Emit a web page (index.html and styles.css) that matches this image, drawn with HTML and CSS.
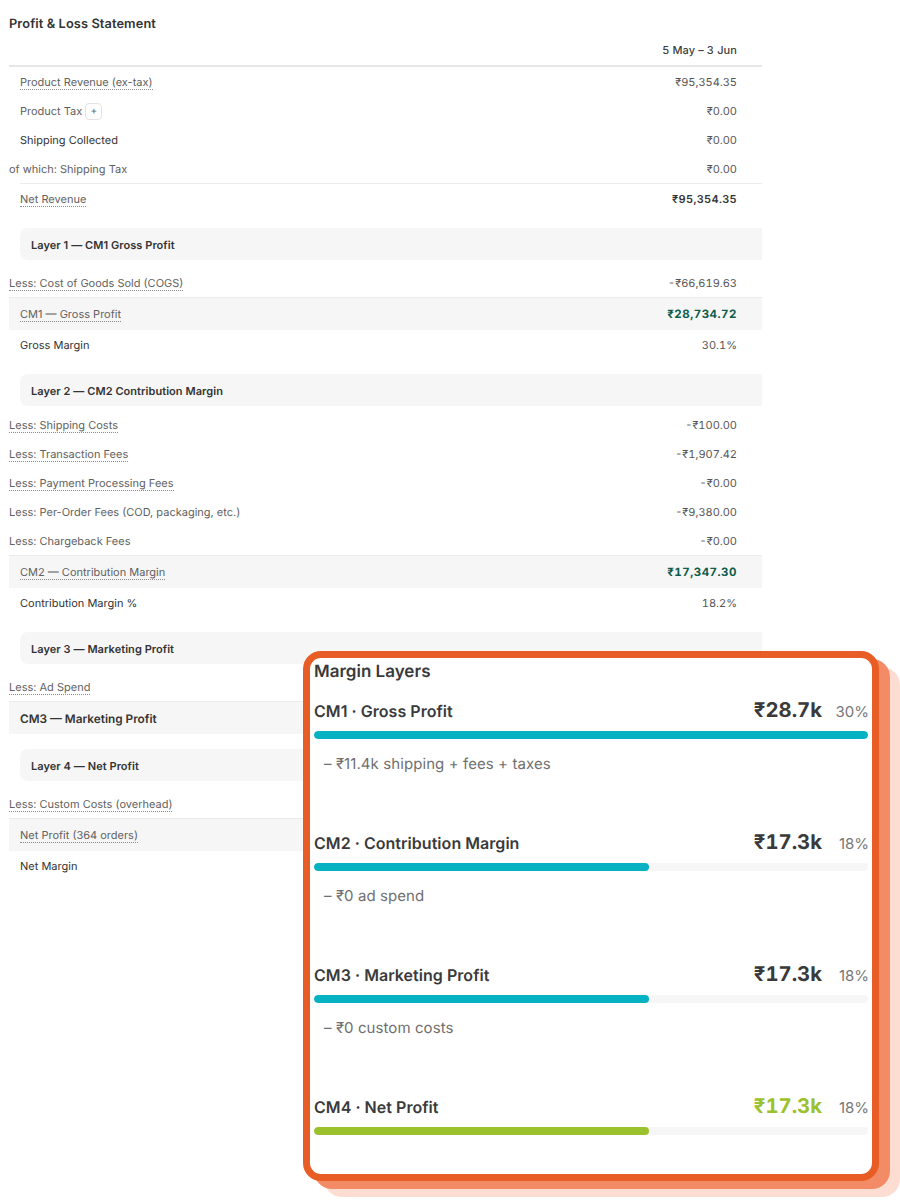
FILE: index.html
```html
<!DOCTYPE html>
<html lang="en">
<head>
<meta charset="utf-8">
<title>Profit &amp; Loss Statement</title>
<link rel="stylesheet" href="styles.css">
</head>
<body>
<main class="page">
  <h1 class="title">Profit &amp; Loss Statement</h1>
  <section class="statement">
    <div class="head"><span>5 May – 3 Jun</span></div>
    <div class="row in"><span class="lbl tip">Product Revenue (ex-tax)</span><span class="val">₹95,354.35</span></div>
    <div class="row in"><span class="lbl">Product Tax<span class="plus">+</span></span><span class="val">₹0.00</span></div>
    <div class="row in"><span class="lbl dark">Shipping Collected</span><span class="val">₹0.00</span></div>
    <div class="row"><span class="lbl">of which: Shipping Tax</span><span class="val">₹0.00</span></div>
    <div class="row total"><span class="lbl tip">Net Revenue</span><span class="val strong">₹95,354.35</span></div>

    <div class="band first">Layer 1 — CM1 Gross Profit</div>
    <div class="row"><span class="lbl tip">Less: Cost of Goods Sold (COGS)</span><span class="val">-₹66,619.63</span></div>
    <div class="row in sub"><span class="lbl tip">CM1 — Gross Profit</span><span class="val green">₹28,734.72</span></div>
    <div class="row in"><span class="lbl dark">Gross Margin</span><span class="val">30.1%</span></div>

    <div class="band tight">Layer 2 — CM2 Contribution Margin</div>
    <div class="row"><span class="lbl tip">Less: Shipping Costs</span><span class="val">-₹100.00</span></div>
    <div class="row"><span class="lbl tip">Less: Transaction Fees</span><span class="val">-₹1,907.42</span></div>
    <div class="row"><span class="lbl tip">Less: Payment Processing Fees</span><span class="val">-₹0.00</span></div>
    <div class="row"><span class="lbl">Less: Per-Order Fees (COD, packaging, etc.)</span><span class="val">-₹9,380.00</span></div>
    <div class="row"><span class="lbl">Less: Chargeback Fees</span><span class="val">-₹0.00</span></div>
    <div class="row in sub"><span class="lbl tip">CM2 — Contribution Margin</span><span class="val green">₹17,347.30</span></div>
    <div class="row in"><span class="lbl dark">Contribution Margin %</span><span class="val">18.2%</span></div>

    <div class="band">Layer 3 — Marketing Profit</div>
    <div class="row"><span class="lbl tip">Less: Ad Spend</span></div>
    <div class="row in sub"><span class="lbl heavy">CM3 — Marketing Profit</span></div>

    <div class="band">Layer 4 — Net Profit</div>
    <div class="row"><span class="lbl tip">Less: Custom Costs (overhead)</span></div>
    <div class="row in sub"><span class="lbl tip">Net Profit (364 orders)</span></div>
    <div class="row in"><span class="lbl dark">Net Margin</span></div>
  </section>

  <aside class="card">
    <h2 class="card-title">Margin Layers</h2>
    <div class="layer">
      <div class="layer-top"><span class="name">CM1 · Gross Profit</span><span class="amount">₹28.7k</span><span class="pct">30%</span></div>
      <div class="track"><div class="fill teal" style="width:100%"></div></div>
      <p class="note">– ₹11.4k shipping + fees + taxes</p>
    </div>
    <div class="layer">
      <div class="layer-top"><span class="name">CM2 · Contribution Margin</span><span class="amount">₹17.3k</span><span class="pct">18%</span></div>
      <div class="track"><div class="fill teal" style="width:60.4%"></div></div>
      <p class="note">– ₹0 ad spend</p>
    </div>
    <div class="layer">
      <div class="layer-top"><span class="name">CM3 · Marketing Profit</span><span class="amount">₹17.3k</span><span class="pct">18%</span></div>
      <div class="track"><div class="fill teal" style="width:60.4%"></div></div>
      <p class="note">– ₹0 custom costs</p>
    </div>
    <div class="layer">
      <div class="layer-top"><span class="name">CM4 · Net Profit</span><span class="amount lime">₹17.3k</span><span class="pct">18%</span></div>
      <div class="track"><div class="fill lime-bg" style="width:60.4%"></div></div>
    </div>
  </aside>
</main>
</body>
</html>
```

FILE: styles.css
```css
* { box-sizing: border-box; }
html, body { margin: 0; background: #fff; }
body { font-family: Inter, "Noto Sans", sans-serif; color: #333; overflow: hidden; text-rendering: geometricPrecision; }
.page { position: relative; width: 900px; height: 1200px; padding: 17px 0 0 9px; }
.title { margin: 0; font-size: 12.8px; line-height: 16px; font-weight: 600; color: #333; letter-spacing: 0.1px; }

.statement { width: 753px; margin-top: 1px; font-size: 11px; }
.head { height: 33px; border-bottom: 2px solid #e6e6e6; padding: 8px 25px 0 0; line-height: 16px; text-align: right; font-weight: 500; color: #404040; letter-spacing: 0.1px; font-variant-numeric: tabular-nums; }

.row { display: flex; justify-content: space-between; align-items: center; height: 29px; padding-right: 25px; color: #616161; }
.row.in { padding-left: 11px; }
.val { color: #555; font-variant-numeric: tabular-nums; }
.strong { font-weight: 600; color: #333; letter-spacing: 0.3px; }
.green { font-weight: 700; color: #0d5c4a; font-size: 11.5px; letter-spacing: 0.5px; }
.lbl { display: inline-flex; align-items: center; line-height: 14px; padding-top: 1px; }
.dark { color: #333; }
.heavy { font-size: 11.8px; font-weight: 600; color: #333; }
.tip { border-bottom: 1px dotted #8a8a8a; }
.plus { display: inline-flex; align-items: center; justify-content: center; width: 17px; height: 17px; margin-left: 3px; border: 1px solid #e3e3e3; border-radius: 4px; color: #666; font-size: 10px; }

.total { height: 32px; margin-left: 11px; padding-bottom: 2px; border-top: 1px solid #ebebeb; }
.sub { height: 33px; background: #f6f6f6; border-top: 1px solid #ebebeb; }
.band { display: flex; align-items: center; height: 32px; margin: 15px 0 8px 11px; padding: 1px 0 0 11px; background: #f6f6f6; border-radius: 8px 0 0 8px; font-weight: 600; color: #333; letter-spacing: 0.06px; }
.band.first { margin-top: 13px; }
.band.tight { margin-bottom: 4px; }

.card { position: absolute; left: 303px; top: 651px; width: 576px; height: 530px; padding: 4px 4px 0; background: #fff; border: 7px solid #e85d25; border-radius: 18px; box-shadow: 11px 8px 0 #f28b66, 21px 16px 0 #fdddd2; }
.card-title { margin: 0 0 14px; font-size: 17px; line-height: 20px; font-weight: 600; color: #3a3a3a; }
.layer { height: 132px; }
.layer-top { display: flex; align-items: baseline; height: 30px; }
.name { flex: 1; font-size: 16px; line-height: 28px; font-weight: 600; color: #3a3a3a; letter-spacing: 0.04px; }
.amount { font-size: 20.3px; line-height: 28px; font-weight: 700; color: #3a3a3a; font-variant-numeric: tabular-nums; }
.amount.lime { color: #9bc12c; }
.pct { width: 47px; margin-right: -1px; text-align: right; font-size: 15px; color: #777; }
.track { height: 8px; margin-top: 5px; border-radius: 4px; background: #f6f6f6; overflow: hidden; }
.fill { height: 100%; border-radius: 4px; }
.teal { background: #05b2c2; }
.lime-bg { background: #9bc12c; }
.note { margin: 15px 0 0 10px; font-size: 15px; line-height: 20px; color: #707070; letter-spacing: 0.08px; }
```
